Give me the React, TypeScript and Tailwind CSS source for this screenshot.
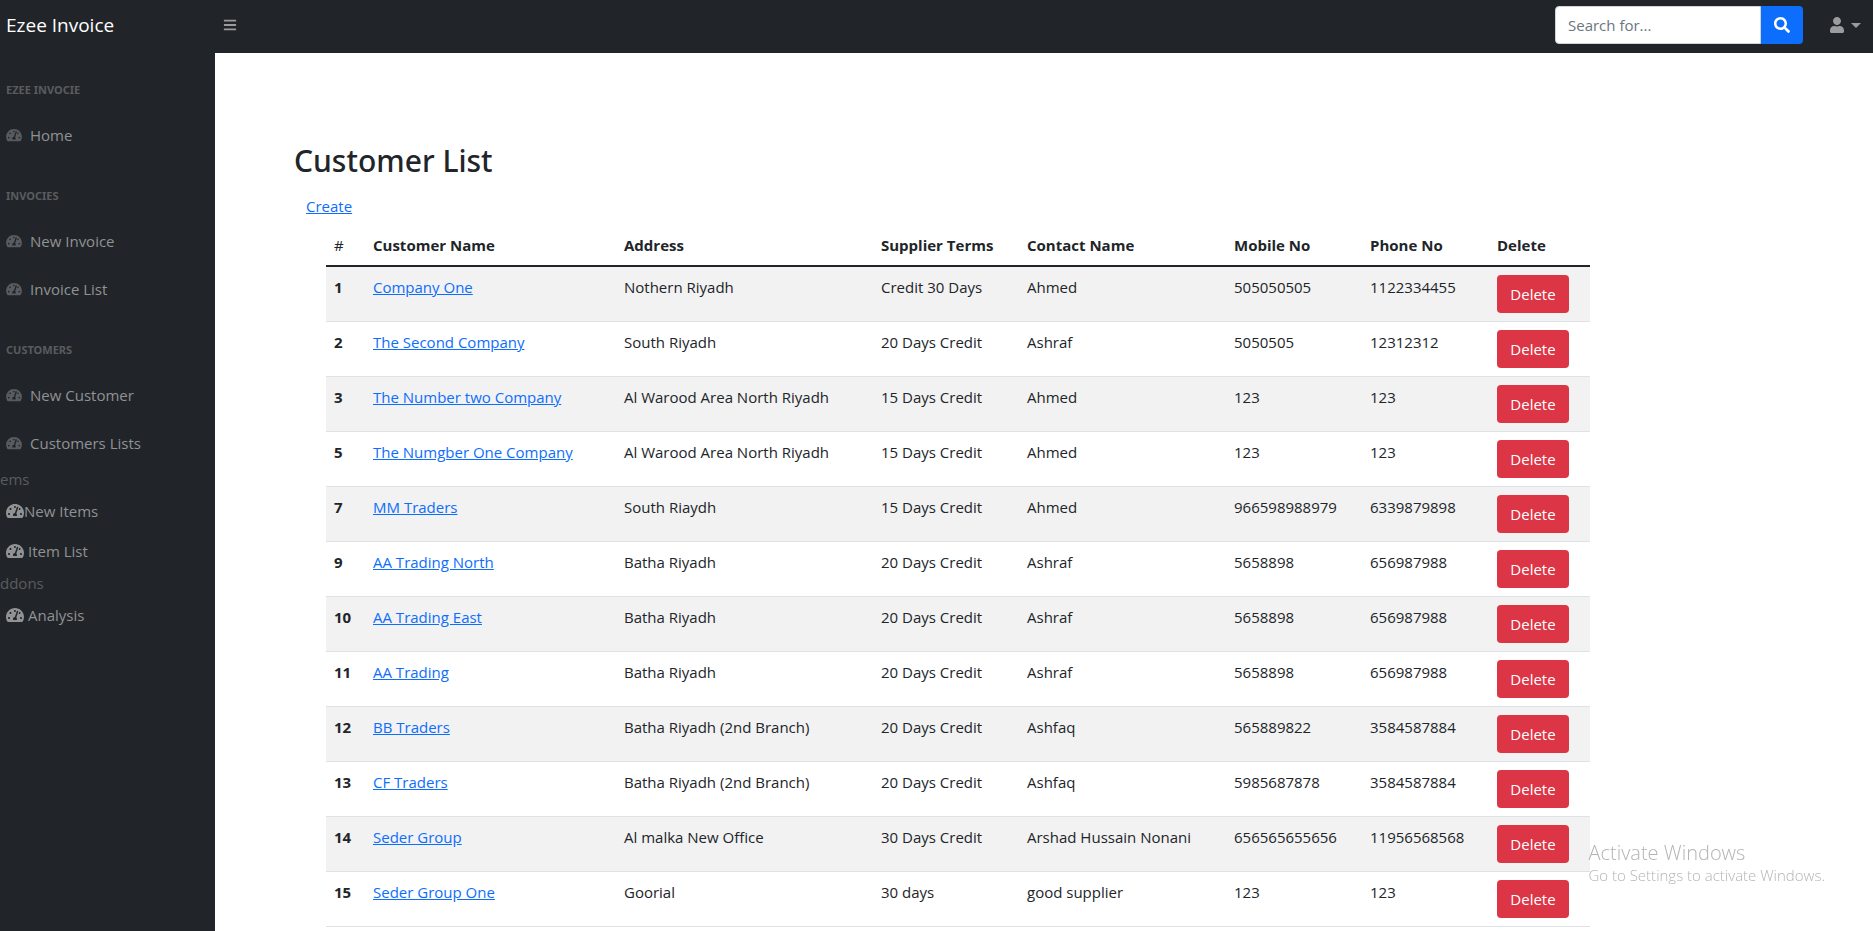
import { FaBars, FaSearch, FaTachometerAlt, FaUser } from 'react-icons/fa';

type Customer = {
  id: number;
  name: string;
  address: string;
  terms: string;
  contact: string;
  mobile: string;
  phone: string;
};

const customers: Customer[] = [
  { id: 1, name: 'Company One', address: 'Nothern Riyadh', terms: 'Credit 30 Days', contact: 'Ahmed', mobile: '505050505', phone: '1122334455' },
  { id: 2, name: 'The Second Company', address: 'South Riyadh', terms: '20 Days Credit', contact: 'Ashraf', mobile: '5050505', phone: '12312312' },
  { id: 3, name: 'The Number two Company', address: 'Al Warood Area North Riyadh', terms: '15 Days Credit', contact: 'Ahmed', mobile: '123', phone: '123' },
  { id: 5, name: 'The Numgber One Company', address: 'Al Warood Area North Riyadh', terms: '15 Days Credit', contact: 'Ahmed', mobile: '123', phone: '123' },
  { id: 7, name: 'MM Traders', address: 'South Riaydh', terms: '15 Days Credit', contact: 'Ahmed', mobile: '966598988979', phone: '6339879898' },
  { id: 9, name: 'AA Trading North', address: 'Batha Riyadh', terms: '20 Days Credit', contact: 'Ashraf', mobile: '5658898', phone: '656987988' },
  { id: 10, name: 'AA Trading East', address: 'Batha Riyadh', terms: '20 Days Credit', contact: 'Ashraf', mobile: '5658898', phone: '656987988' },
  { id: 11, name: 'AA Trading', address: 'Batha Riyadh', terms: '20 Days Credit', contact: 'Ashraf', mobile: '5658898', phone: '656987988' },
  { id: 12, name: 'BB Traders', address: 'Batha Riyadh (2nd Branch)', terms: '20 Days Credit', contact: 'Ashfaq', mobile: '565889822', phone: '3584587884' },
  { id: 13, name: 'CF Traders', address: 'Batha Riyadh (2nd Branch)', terms: '20 Days Credit', contact: 'Ashfaq', mobile: '5985687878', phone: '3584587884' },
  { id: 14, name: 'Seder Group', address: 'Al malka New Office', terms: '30 Days Credit', contact: 'Arshad Hussain Nonani', mobile: '656565655656', phone: '11956568568' },
  { id: 15, name: 'Seder Group One', address: 'Goorial', terms: '30 days', contact: 'good supplier', mobile: '123', phone: '123' },
];

const sections = [
  { title: 'Ezee Invocie', links: ['Home'] },
  { title: 'Invocies', links: ['New Invoice', 'Invoice List'] },
  { title: 'Customers', links: ['New Customer', 'Customers Lists'] },
];

function TopBar() {
  return (
    <header className="flex h-[53px] items-center bg-[#212529] pb-[3px]">
      <a href="#" className="w-[215px] shrink-0 pl-1.5 text-[19px] text-white">
        Ezee Invoice
      </a>
      <button type="button" aria-label="Toggle sidebar" className="px-2 py-1 text-[#9a9c9e]">
        <FaBars className="h-3.5 w-3.5" />
      </button>
      <form className="ml-auto flex h-[38px]" onSubmit={(e) => e.preventDefault()}>
        <input
          type="text"
          aria-label="Search for..."
          placeholder="Search for..."
          className="w-[206px] rounded-l border border-[#ced4da] bg-white px-3 text-[15px] text-[#212529] placeholder:text-[#6c757d]"
        />
        <button type="submit" aria-label="Search" className="flex w-[42px] items-center justify-center rounded-r bg-[#0d6efd] text-white">
          <FaSearch className="h-4 w-4" />
        </button>
      </form>
      <button type="button" aria-label="Account menu" className="mr-3 ml-[26px] flex items-center gap-1.5 text-[#9a9c9e]">
        <FaUser className="h-4 w-4" />
        <svg viewBox="0 0 10 5" className="h-[5px] w-2.5" fill="currentColor" aria-hidden="true">
          <path d="M0 0h10L5 5z" />
        </svg>
      </button>
    </header>
  );
}

function NavLink({ label, gap }: { label: string; gap: string }) {
  return (
    <a href="#" className={`flex h-10 items-center pl-1.5 text-[#909294] ${gap}`}>
      <FaTachometerAlt className="h-4 w-[18px] shrink-0" />
      {label}
    </a>
  );
}

function Sidebar() {
  return (
    <nav className="w-[215px] shrink-0 bg-[#212529] text-[15px]">
      {sections.map((section) => (
        <div key={section.title}>
          <h2 className="pt-7 pb-3 pl-1.5 font-['Noto_Sans','Open_Sans',sans-serif] text-[11px] leading-[18px] font-bold text-[#595c5f] uppercase">
            {section.title}
          </h2>
          {section.links.map((label) => (
            <a key={label} href="#" className="flex h-12 items-center gap-2 pl-1.5 text-[#909294]">
              <FaTachometerAlt className="h-3.5 w-4 shrink-0 text-[#595c5f]" />
              {label}
            </a>
          ))}
        </div>
      ))}
      <div className="leading-6 text-[#595c5f]">ems</div>
      <NavLink label="New Items" gap="gap-0" />
      <NavLink label="Item List" gap="gap-1" />
      <div className="leading-6 text-[#595c5f]">ddons</div>
      <NavLink label="Analysis" gap="gap-1" />
    </nav>
  );
}

function CustomerTable() {
  return (
    <table className="w-full table-fixed border-separate border-spacing-0 text-left text-[15px] leading-6 text-[#212529]">
      <colgroup>
        <col className="w-[39px]" />
        <col className="w-[251px]" />
        <col className="w-[257px]" />
        <col className="w-[146px]" />
        <col className="w-[207px]" />
        <col className="w-[136px]" />
        <col className="w-[127px]" />
        <col className="w-[101px]" />
      </colgroup>
      <thead>
        <tr className="*:border-b-2 *:border-[#212529] *:p-2">
          <th scope="col" className="font-medium">#</th>
          <th scope="col">Customer Name</th>
          <th scope="col">Address</th>
          <th scope="col">Supplier Terms</th>
          <th scope="col">Contact Name</th>
          <th scope="col">Mobile No</th>
          <th scope="col">Phone No</th>
          <th scope="col">Delete</th>
        </tr>
      </thead>
      <tbody>
        {customers.map((c) => (
          <tr key={c.id} className="align-top odd:bg-[#f2f2f2] *:border-b *:border-[#dee2e6] *:p-2">
            <th scope="row">{c.id}</th>
            <td>
              <a href="#" className="text-[#0d6efd] underline">{c.name}</a>
            </td>
            <td>{c.address}</td>
            <td>{c.terms}</td>
            <td>{c.contact}</td>
            <td>{c.mobile}</td>
            <td>{c.phone}</td>
            <td>
              <button type="button" className="block h-[38px] w-[72px] rounded bg-[#dc3545] text-white">
                Delete
              </button>
            </td>
          </tr>
        ))}
      </tbody>
    </table>
  );
}

export default function App() {
  return (
    <div className="flex min-h-screen flex-col bg-white font-['Open_Sans','Noto_Sans',sans-serif]">
      <TopBar />
      <div className="flex grow">
        <Sidebar />
        <main className="min-w-0 grow pt-[89px] pl-[79px]">
          <div className="max-w-[1296px]">
            <h1 className="mb-2 font-['Noto_Sans','Open_Sans',sans-serif] text-[30px] leading-[38px] font-medium text-[#212529]">
              Customer List
            </h1>
            <a href="#" className="ml-3 block w-fit pt-1.5 text-[15px] leading-6 text-[#0d6efd] underline">
              Create
            </a>
            <div className="pt-[7px] pl-8">
              <CustomerTable />
            </div>
          </div>
        </main>
      </div>
      <aside className="pointer-events-none fixed right-12 bottom-[46px] text-[#b4b4b4]">
        <p className="text-[20px] leading-6 font-light">Activate Windows</p>
        <p className="text-[15px] leading-5 font-light">Go to Settings to activate Windows.</p>
      </aside>
    </div>
  );
}
